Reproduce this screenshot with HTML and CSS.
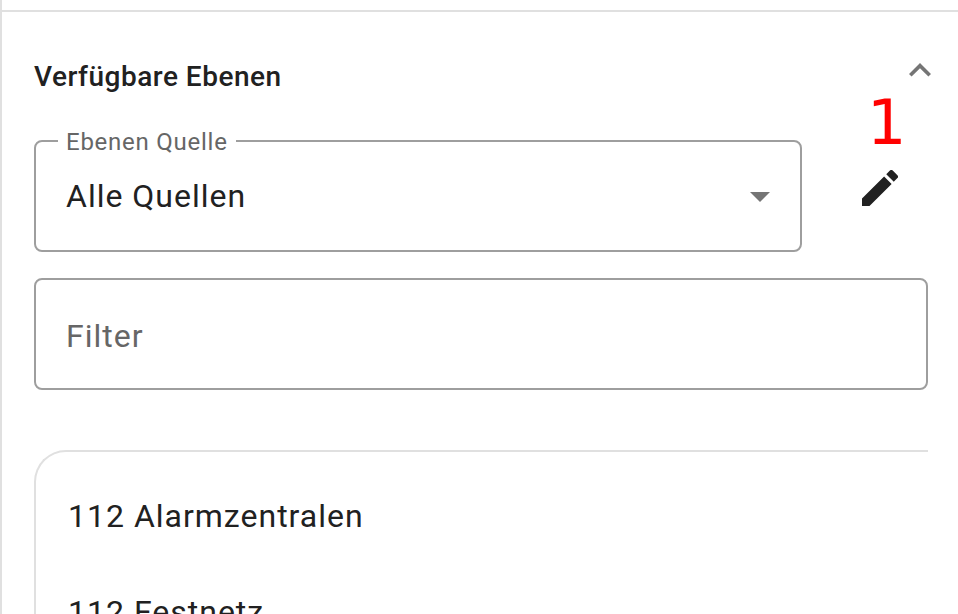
FILE: index.html
```html
<!DOCTYPE html>
<html lang="de">
<head>
<meta charset="utf-8">
<title>Verfügbare Ebenen</title>
<link rel="stylesheet" href="styles.css">
</head>
<body>
<main class="panel">
  <header class="panel-header">
    <h2 class="title">Verfügbare Ebenen</h2>
    <svg class="chevron" viewBox="6 8 12 7.410"><path d="M12 8l-6 6 1.410 1.410L12 10.830l4.590 4.580L18 14z"/></svg>
  </header>
  <div class="source-row">
    <div class="field source">
      <span class="label">Ebenen Quelle</span>
      <span class="value">Alle Quellen</span>
      <svg class="arrow" viewBox="0 0 20 10"><path d="M0 0h20L10 10z"/></svg>
    </div>
    <div class="edit">
      <span class="marker">1</span>
      <svg class="pencil" viewBox="3 3 18 18"><path d="M3 17.250V21h3.750L17.810 9.940l-3.750-3.750L3 17.250zM20.710 7.040a.996.996 0 0 0 0-1.410l-2.340-2.340a.996.996 0 0 0-1.410 0l-1.830 1.830 3.750 3.750 1.830-1.830z"/></svg>
    </div>
  </div>
  <div class="field filter"><span class="placeholder">Filter</span></div>
  <ul class="layers">
    <li>112 Alarmzentralen</li>
    <li>112 Festnetz</li>
  </ul>
</main>
</body>
</html>
```
FILE: styles.css
```css
* { box-sizing: border-box; }
body {
  margin: 0;
  height: 614px;
  overflow: hidden;
  background: #fff;
  color: #212121;
  font-family: Roboto, sans-serif;
}
.panel {
  height: 614px;
  overflow: hidden;
  border-left: 2px solid #e0e0e0;
  padding: 10px 30px 0 32px;
  background: linear-gradient(#e0e0e0, #e0e0e0) 0 10px / 100% 2px no-repeat;
}
.panel-header {
  display: flex;
  justify-content: space-between;
  height: 130px;
  margin-right: -3px;
}
.title {
  margin: 51px 0 0;
  font-size: 28px;
  line-height: 32px;
  font-weight: 500;
  letter-spacing: 0.5px;
}
.chevron {
  width: 22px;
  height: 13.6px;
  margin-top: 53px;
  fill: #757575;
}
.source-row {
  display: flex;
  height: 138px;
}
.field {
  position: relative;
  display: flex;
  align-items: center;
  height: 112px;
  padding: 0 30px;
  border: 2px solid #9e9e9e;
  border-radius: 8px;
  font-size: 32px;
  line-height: 48px;
  letter-spacing: 1px;
}
.source {
  width: 768px;
  justify-content: space-between;
}
.filter { padding-top: 4px; }
.label {
  position: absolute;
  top: -14px;
  left: 22px;
  padding: 0 8px;
  background: #fff;
  color: #666;
  font-size: 24px;
  line-height: 28px;
  letter-spacing: 0.75px;
}
.arrow {
  width: 20px;
  height: 10px;
  margin-top: 2px;
  fill: #757575;
}
.edit {
  position: relative;
  width: 36px;
  margin-left: 60px;
}
.marker {
  position: absolute;
  left: 5px;
  top: -53px;
  color: #f00;
  font: 62px/72px "DejaVu Sans", sans-serif;
}
.pencil {
  display: block;
  width: 36px;
  height: 36px;
  margin-top: 30px;
  fill: #212121;
}
.placeholder { color: #666; }
.layers {
  height: 300px;
  margin: 60px 0 0;
  padding: 16px 32px;
  border: 2px solid #e0e0e0;
  border-width: 2px 0 0 2px;
  border-radius: 32px 0 0 0;
  list-style: none;
  font-size: 32px;
  letter-spacing: 1px;
}
.layers li {
  height: 96px;
  line-height: 96px;
}
```
